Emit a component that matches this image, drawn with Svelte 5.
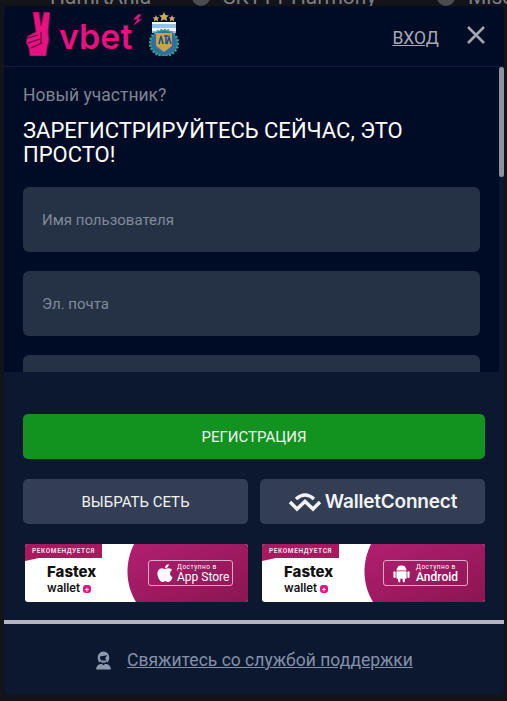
<script lang="ts">
  // Visible fields first, the rest sit below the scroll fold
  const fields: string[] = ["Имя пользователя", "Эл. почта", "Пароль", "Повторите пароль", "Промокод"];

  const banners = [
    { top: "Доступно в", name: "App Store", icon: "apple" },
    { top: "Доступно в", name: "Android", icon: "android" },
  ];
</script>

<div class="page">
  <div class="behind">
    <span class="b1">HamrtAnla</span>
    <i class="blob"></i>
    <span class="b2">SKTT1 Harmony</span>
    <i class="blob"></i>
    <span class="b3">Misc</span>
  </div>

  <div class="modal">
    <header class="top">
      <div class="brand">
        <svg class="hand" viewBox="0 0 24 44" width="24" height="44" aria-hidden="true">
          <path d="M7 0 L13 0 L15 14 L18 0 L24 .5 L22 20 L23 28 L21 36 L20 44 L4 44 L3 36 L0 30 L2 24 L10 20 Z" fill="#e5127f" stroke="#8a1058" stroke-width=".8"/>
          <path d="M2 26 L12 23 M2 31 L14 27 M5 36 L16 31 M15 20 L15 31" stroke="#5a0a3a" stroke-width="1.200" fill="none"/>
        </svg>
        <span class="word">vbet</span>
        <svg class="bolt" viewBox="0 0 12 14" width="11" height="13" aria-hidden="true">
          <path d="M7 0 L1 6 L6 6 L1 13 L11 5.500 L6.500 5.500 L10 1 Z" fill="#e5127f"/>
        </svg>
        <svg class="crest" viewBox="0 0 30 44" width="30" height="44" aria-hidden="true">
          <path d="M15 0 L16.500 3 L20 3.400 L17.500 5.600 L18.200 9 L15 7.400 L11.800 9 L12.500 5.600 L10 3.400 L13.500 3 Z" fill="#c9a860"/>
          <path d="M7 3 L8 5.200 L10.400 5.500 L8.700 7 L9.200 9.400 L7 8.200 L4.800 9.400 L5.300 7 L3.600 5.500 L6 5.200 Z" fill="#c9a860"/>
          <path d="M23 3 L24 5.200 L26.400 5.500 L24.700 7 L25.200 9.400 L23 8.200 L20.800 9.400 L21.300 7 L19.600 5.500 L22 5.200 Z" fill="#c9a860"/>
          <rect x="3" y="10" width="24" height="2" fill="#f2f4f6"/>
          <rect x="3" y="12" width="24" height="4" fill="#8fc3e8"/>
          <rect x="3" y="16" width="24" height="3" fill="#f2f4f6"/>
          <rect x="3" y="19" width="24" height="2" fill="#8fc3e8"/>
          <ellipse cx="15" cy="31" rx="14" ry="13" fill="#2e6f9c"/>
          <ellipse cx="15" cy="31" rx="14" ry="13" fill="none" stroke="#3fa08d" stroke-width="2.500" stroke-dasharray="2 1.500"/>
          <path d="M7 21 L23 21 L23 34 L15 40 L7 34 Z" fill="#c9a24c"/>
          <path d="M10 32 L12 24 L14 32 M15 24 L19 24 M17 24 L17 32 M18 32 L20 25 L22 32" stroke="#1f4f9c" stroke-width="1.500" fill="none"/>
        </svg>
      </div>
      <div class="top-actions">
        <a class="login" href="#login">ВХОД</a>
        <button class="close" aria-label="Закрыть">
          <svg viewBox="0 0 18 18" width="18" height="18"><path d="M1 1 L17 17 M17 1 L1 17" stroke="#a2a5af" stroke-width="2.600" fill="none"/></svg>
        </button>
      </div>
    </header>

    <div class="scroll">
      <p class="lead">Новый участник?</p>
      <h1>Зарегистрируйтесь сейчас, это просто!</h1>
      <form class="fields">
        {#each fields as f}
          <input class="field" placeholder={f} />
        {/each}
      </form>
      <!-- headless chrome hides real scrollbars, so the bar is drawn -->
      <div class="bar"><div class="thumb"></div></div>
    </div>

    <footer class="bottom">
      <button class="btn green">РЕГИСТРАЦИЯ</button>
      <div class="pair">
        <button class="btn slate">ВЫБРАТЬ СЕТЬ</button>
        <button class="btn slate wc">
          <svg viewBox="0 0 34 20" width="34" height="20" aria-hidden="true">
            <path d="M8 7 Q17 -1 26 7" stroke="#f2f3f5" stroke-width="3.500" fill="none"/>
            <path d="M2 10 L9 17 L17 9.500 L25 17 L32 10" stroke="#f2f3f5" stroke-width="3.500" fill="none"/>
          </svg>
          <span>WalletConnect</span>
        </button>
      </div>
      <div class="pair banners">
        {#each banners as b}
          <div class="banner {b.icon}">
            <svg class="wave" viewBox="0 0 223 58" preserveAspectRatio="none" aria-hidden="true">
              <defs>
                <linearGradient id="pink-{b.icon}" x1="0" y1="0" x2="1" y2="1">
                  <stop offset="0" stop-color="#b21f70"/>
                  <stop offset="1" stop-color="#8c1552"/>
                </linearGradient>
              </defs>
              <path d="M109 0 L223 0 L223 58 L111 58 C100 40 100 18 109 0 Z" fill="url(#pink-{b.icon})"/>
              <path d="M0 14 L0 17 L14 14 Z" fill="#a9195f"/>
            </svg>
            <span class="tag">РЕКОМЕНДУЕТСЯ</span>
            <div class="fastex">
              <b>Fastex</b>
              <span>wallet <i>+</i></span>
            </div>
            <div class="store">
              {#if b.icon === "apple"}
                <svg viewBox="3 2 18 20" width="18" height="20" aria-hidden="true"><path fill="#fff" d="M17.050 20.280c-.98.95-2.050.8-3.080.35-1.090-.46-2.090-.48-3.240 0-1.440.62-2.200.44-3.060-.35C2.790 15.250 3.510 7.590 9.050 7.310c1.350.07 2.290.74 3.080.8 1.180-.24 2.310-.93 3.570-.84 1.510.12 2.650.72 3.400 1.800-3.120 1.870-2.380 5.980.48 7.130-.57 1.500-1.310 2.990-2.540 4.090zM12.030 7.250c-.15-2.230 1.660-4.070 3.740-4.250.29 2.580-2.340 4.500-3.740 4.250z"/></svg>
              {:else}
                <svg viewBox="0 0 20 22" width="17" height="19" aria-hidden="true">
                  <path fill="#fff" d="M4 7.500a6 6 0 0 1 12 0z"/>
                  <path stroke="#fff" stroke-width="1" d="M6 2 L7.500 4 M14 2 L12.500 4"/>
                  <rect x="4" y="8.300" width="12" height="9" rx="1" fill="#fff"/>
                  <rect x="0.500" y="8.300" width="2.600" height="8" rx="1.300" fill="#fff"/>
                  <rect x="16.900" y="8.300" width="2.600" height="8" rx="1.300" fill="#fff"/>
                  <rect x="6" y="16" width="2.600" height="5.500" rx="1.300" fill="#fff"/>
                  <rect x="11.400" y="16" width="2.600" height="5.500" rx="1.300" fill="#fff"/>
                </svg>
              {/if}
              <div class="store-text">
                <small>{b.top}</small>
                <strong>{b.name}</strong>
              </div>
            </div>
          </div>
        {/each}
      </div>
      <div class="rule"></div>
      <div class="support">
        <svg viewBox="0 0 16 18" width="17" height="19" aria-hidden="true">
          <path fill="#8f99ad" d="M8 .5a5.500 5.500 0 0 1 5.500 5.500c0 2-.5 3.500-1.500 5l-1-1c-.8.800-1.700 1.200-3 1.200S5.800 10.800 5 10l-1 1C3 9.500 2.500 8 2.500 6A5.500 5.500 0 0 1 8 .5zM1 17.500c0-3 1.500-4.800 5-5.500l2 1.500 2-1.500c3.500.7 5 2.500 5 5.500z"/>
          <path fill="#0c1830" d="M4.500 5.200 L11.500 4 L9.500 7 L11 9 L6 9 Q4.500 7.500 4.500 5.200 Z"/>
        </svg>
        <a href="#support">Свяжитесь со службой поддержки</a>
      </div>
    </footer>
  </div>
</div>

<style>
  :global(body) {
    margin: 0;
    background: #12141a;
  }

  .page {
    position: relative;
    width: 507px;
    height: 701px;
    overflow: hidden;
    padding: 6px 3px 6px 4px;
    box-sizing: border-box;
    font-family: Roboto, "Liberation Sans", sans-serif;
  }

  /* page that shows through above the modal */
  .behind {
    position: absolute;
    top: -15px;
    left: 50px;
    display: flex;
    align-items: center;
    color: #7d7f85;
    font-size: 21px;
    white-space: nowrap;
  }

  .b1 {
    width: 142px;
  }

  .b2 {
    width: 214px;
    margin-left: 13px;
  }

  .b3 {
    margin-left: 13px;
  }

  .blob {
    width: 18px;
    height: 18px;
    border-radius: 50%;
    background: #4a4c50;
  }

  .modal {
    position: relative;
    height: 689px;
    display: flex;
    flex-direction: column;
    border-radius: 6px;
    overflow: hidden;
    background: #000b25;
  }

  .top {
    flex: none;
    height: 61px;
    box-sizing: border-box;
    border-bottom: 1px solid #0f1c3a;
    display: flex;
    align-items: center;
    justify-content: space-between;
    padding: 0 19px 0 22px;
  }

  .brand {
    display: flex;
    align-items: flex-start;
    height: 44px;
    margin-top: -4px;
  }

  .word {
    color: #e5127f;
    font-family: Inter, sans-serif;
    font-weight: 600;
    font-size: 34px;
    line-height: 34px;
    margin-left: 9px;
    margin-top: 8px;
  }

  .bolt {
    margin-top: 2px;
  }

  .crest {
    margin-left: 6px;
  }

  .top-actions {
    display: flex;
    align-items: center;
    gap: 28px;
  }

  .login {
    color: #a6a9b3;
    font-size: 17.500px;
    text-decoration: underline;
    margin-top: 3px;
  }

  .close {
    background: none;
    border: 0;
    padding: 0;
    display: flex;
    margin-top: -2px;
  }

  .scroll {
    position: relative;
    flex: 1;
    min-height: 0;
    overflow: hidden;
    padding: 16px 24px 0 19px;
  }

  .bar {
    position: absolute;
    top: 0;
    right: 0;
    bottom: 0;
    width: 5px;
    background: #0c1730;
  }

  .thumb {
    height: 110px;
    background: #8e93a1;
    border-radius: 3px;
  }

  .lead {
    margin: 0;
    color: #7f8594;
    font-size: 17.500px;
    line-height: 24px;
  }

  h1 {
    margin: 12px 0 0;
    color: #fff;
    font-size: 22px;
    font-weight: 400;
    line-height: 24px;
    text-transform: uppercase;
  }

  .fields {
    display: flex;
    flex-direction: column;
    gap: 19px;
    margin-top: 20px;
  }

  .field {
    height: 65px;
    box-sizing: border-box;
    border: 0;
    border-radius: 6px;
    background: #253246;
    padding: 0 19px;
    font: 15px Roboto, sans-serif;
    color: #fff;
  }

  .field::placeholder {
    color: #818a99;
    opacity: 1;
  }

  .bottom {
    flex: none;
    height: 323px;
    box-sizing: border-box;
    background: #0c1830;
    padding: 42px 0 0;
    display: flex;
    flex-direction: column;
  }

  .btn {
    border: 0;
    height: 45px;
    border-radius: 5px;
    color: #f1f3f4;
    font: 400 15px Roboto, sans-serif;
  }

  .green {
    background: #12921f;
    margin: 0 19px;
  }

  .pair {
    display: grid;
    grid-template-columns: 1fr 1fr;
    gap: 12px;
    margin: 20px 19px 0;
  }

  .slate {
    background: #333e54;
  }

  .wc {
    display: flex;
    align-items: center;
    justify-content: center;
    gap: 3px;
    padding: 0;
  }

  .wc span {
    font: 600 19px Inter, sans-serif;
    letter-spacing: -0.2px;
  }

  .banners {
    margin-top: 20px;
    gap: 14px;
    margin-left: 21px;
  }

  .banner {
    position: relative;
    height: 58px;
    background: #fff;
    border-radius: 3px;
    overflow: hidden;
  }

  .wave {
    position: absolute;
    inset: 0;
    width: 100%;
    height: 100%;
  }

  .tag {
    position: absolute;
    left: 0;
    top: 0;
    width: 77px;
    height: 14px;
    background: #a9195f;
    color: #f4dce8;
    font: 700 6.500px/14px Roboto, sans-serif;
    letter-spacing: 0.6px;
    text-align: center;
  }

  .fastex {
    position: absolute;
    left: 22px;
    top: 19px;
    color: #111;
    line-height: 1;
  }

  .fastex b {
    display: block;
    font: 800 15px/18px Inter, sans-serif;
  }

  .fastex span {
    display: block;
    font: 600 11.500px/14px Inter, sans-serif;
  }

  .fastex i {
    display: inline-block;
    width: 8px;
    height: 8px;
    line-height: 8px;
    border-radius: 3px;
    background: #e5127f;
    color: #fff;
    font-style: normal;
    text-align: center;
    font-size: 8px;
  }

  .store {
    position: absolute;
    left: 123px;
    top: 16px;
    width: 85px;
    height: 26px;
    box-sizing: border-box;
    border: 1px solid #dba9c6;
    border-radius: 3px;
    display: flex;
    align-items: center;
    gap: 3px;
    padding-left: 7px;
    color: #fff;
  }

  .android .store {
    left: 121px;
    gap: 6px;
    padding-left: 9px;
  }

  .store-text {
    display: flex;
    flex-direction: column;
  }

  .store small {
    font: 400 6.500px/8px Roboto, sans-serif;
    letter-spacing: 0.5px;
  }

  .store strong {
    font: 400 12px/12px Roboto, sans-serif;
  }

  .android strong {
    font-weight: 500;
  }

  .rule {
    height: 4px;
    background: #b5b6c4;
    margin-top: 18px;
  }

  .support {
    display: flex;
    align-items: center;
    justify-content: center;
    gap: 15px;
    margin-top: 26px;
  }

  .support a {
    color: #8490a8;
    font-size: 17.500px;
    text-decoration: underline;
  }
</style>
